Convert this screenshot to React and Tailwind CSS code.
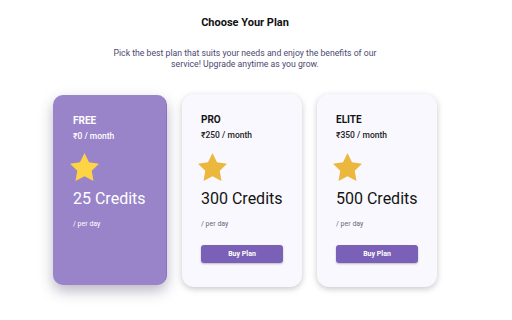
// App.jsx

const plans = [
  { name: "FREE", price: "₹0 / month", credits: "25 Credits", active: true },
  { name: "PRO", price: "₹250 / month", credits: "300 Credits" },
  { name: "ELITE", price: "₹350 / month", credits: "500 Credits" },
];

function Star({ color }) {
  return (
    <svg
      className="block -ml-[3px] h-[28px] w-[29px]"
      viewBox="2 2 20 19.02"
      preserveAspectRatio="none"
    >
      <polygon
        fill={color}
        points="12,2 15.09,8.26 22,9.27 17,14.14 18.18,21.02 12,17.77 5.82,21.02 7,14.14 2,9.27 8.91,8.26"
      />
    </svg>
  );
}

function PlanCard({ plan }) {
  if (plan.active) {
    return (
      <div className="mt-px flex h-[190px] w-[114px] flex-col rounded-[10px] border-r border-[#8a72c0] bg-[#9983c9] px-[20px] pt-[20px] text-white shadow-[0_6px_14px_rgba(60,50,90,0.35)]">
        <div className="text-[10px] font-bold leading-[12px]">{plan.name}</div>
        <div className="mt-[4px] text-[8.5px] font-medium leading-[11px]">
          {plan.price}
        </div>
        <div className="mt-[11px]">
          <Star color="#fcd444" />
        </div>
        <div className="mt-[8px] text-[16px] leading-[20px]">{plan.credits}</div>
        <div className="mt-[10px] text-[7px] leading-[10px]">/ per day</div>
      </div>
    );
  }

  return (
    <div className="flex h-[193px] w-[120px] flex-col rounded-[12px] bg-[#f9f8fe] px-[19px] pt-[20px] text-[#141414] shadow-[0_2px_6px_rgba(0,0,0,0.22)]">
      <div className="text-[10px] font-bold leading-[12px]">{plan.name}</div>
      <div className="mt-[4px] text-[8.5px] font-medium leading-[11px] text-[#222]">
        {plan.price}
      </div>
      <div className="mt-[12px]">
        <Star color="#ebb73d" />
      </div>
      <div className="mt-[8px] text-[16px] leading-[20px]">{plan.credits}</div>
      <div className="mt-[10px] text-[7px] leading-[10px] text-[#6b6880]">/ per day</div>
      <button className="mt-[16px] h-[18px] w-full rounded-[3px] bg-[#7b60b7] text-[7px] font-bold text-white shadow-[0_1px_2px_rgba(0,0,0,0.25)]">
        Buy Plan
      </button>
    </div>
  );
}

export default function App() {
  return (
    <div className="h-[320px] w-[512px] bg-white font-['Roboto',sans-serif]">
      <div className="flex w-[490px] flex-col items-center">
        {/* Heading */}
        <h1 className="pt-[16px] text-[11px] font-bold leading-[13px] text-[#111]">
          Choose Your Plan
        </h1>
        <p className="mt-[19px] w-[280px] text-center text-[8.7px] leading-[11px] text-[#4d4872]">
          Pick the best plan that suits your needs and enjoy the benefits of our
          service! Upgrade anytime as you grow.
        </p>

        {/* Cards */}
        <div className="mt-[24px] flex items-start gap-[15px]">
          {plans.map((plan) => (
            <PlanCard key={plan.name} plan={plan} />
          ))}
        </div>
      </div>
    </div>
  );
}
